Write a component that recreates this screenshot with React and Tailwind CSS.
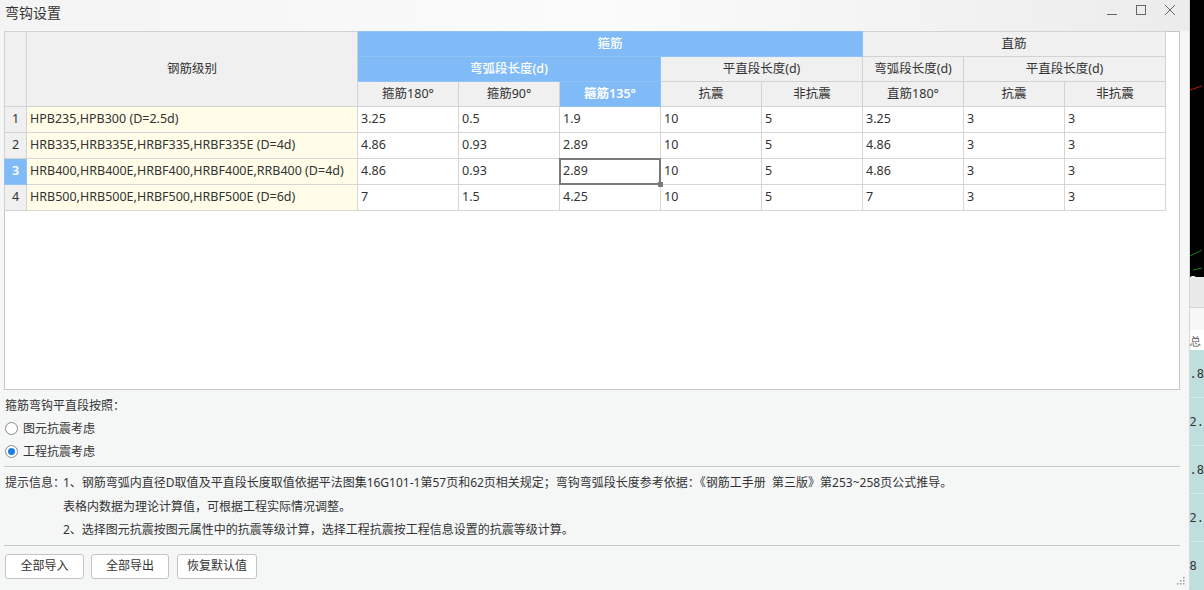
import React from "react";

const rows = [
  ["HPB235,HPB300 (D=2.5d)", "3.25", "0.5", "1.9", "10", "5", "3.25", "3", "3"],
  ["HRB335,HRB335E,HRBF335,HRBF335E (D=4d)", "4.86", "0.93", "2.89", "10", "5", "4.86", "3", "3"],
  ["HRB400,HRB400E,HRBF400,HRBF400E,RRB400 (D=4d)", "4.86", "0.93", "2.89", "10", "5", "4.86", "3", "3"],
  ["HRB500,HRB500E,HRBF500,HRBF500E (D=6d)", "7", "1.5", "4.25", "10", "5", "7", "3", "3"],
];

const font = { fontFamily: '"Noto Sans", "Noto Sans CJK SC", sans-serif' };

function Radio({ checked, label }) {
  return (
    <label className="flex items-center h-[23px] gap-[5px]">
      <span className="w-[13px] h-[13px] rounded-full border border-[#8a8a8a] bg-white flex items-center justify-center">
        {checked && <span className="w-[7px] h-[7px] rounded-full bg-[#1f7be8]" />}
      </span>
      <span>{label}</span>
    </label>
  );
}

export default function App() {
  const th = "border border-[#d2d2d2] bg-[#f0f0f0] font-normal text-center";
  const blue = "border border-[#8fc3f8] bg-[#80bbf8] text-white font-medium text-center";
  const td = "border border-[#d6d6d6] bg-white px-[3px] text-left";
  return (
    <div className="w-[1204px] h-[590px] flex overflow-hidden text-[#333]" style={font}>
      <div className="w-[1192px] h-full flex flex-col bg-[#f5f7f7] border-r border-[#d8d8d8]">
        {/* title bar */}
        <div className="h-[31px] flex items-start bg-gradient-to-r from-[#f4f4f4] via-[#fbfbfb] to-[#ececec]">
          <div className="pl-[5px] pt-[2px] text-[14px]">弯钩设置</div>
          <div className="ml-auto flex items-center gap-[17px] pr-[13px] pt-[4px] text-[#555]">
            <svg width="12" height="12" viewBox="0 0 12 12"><path d="M1 10.5h10" stroke="#666" strokeWidth="1" /></svg>
            <svg width="12" height="12" viewBox="0 0 12 12"><rect x="1.5" y="1.5" width="9" height="9" fill="none" stroke="#666" strokeWidth="1" /></svg>
            <svg width="12" height="12" viewBox="0 0 12 12"><path d="M1 1l10 10M11 1L1 11" stroke="#666" strokeWidth="1" /></svg>
          </div>
        </div>

        {/* table */}
        <div className="ml-[4px] w-[1176px] h-[359px] border border-[#c6c6c6] bg-white">
          <table className="table-fixed border-collapse text-[12.5px] w-[1161px] -mt-px -ml-px">
            <colgroup>
              <col className="w-[22px]" />
              <col className="w-[331px]" />
              <col className="w-[101px]" />
              <col className="w-[101px]" />
              <col className="w-[101px]" />
              <col className="w-[101px]" />
              <col className="w-[101px]" />
              <col className="w-[101px]" />
              <col className="w-[101px]" />
              <col className="w-[101px]" />
            </colgroup>
            <thead>
              <tr className="h-[25px]">
                <th rowSpan={3} className={th}></th>
                <th rowSpan={3} className={th}>钢筋级别</th>
                <th colSpan={5} className={blue}>箍筋</th>
                <th colSpan={3} className={th}>直筋</th>
              </tr>
              <tr className="h-[25px]">
                <th colSpan={3} className={blue}>弯弧段长度(d)</th>
                <th colSpan={2} className={th}>平直段长度(d)</th>
                <th className={th}>弯弧段长度(d)</th>
                <th colSpan={2} className={th}>平直段长度(d)</th>
              </tr>
              <tr className="h-[25px]">
                <th className={th}>箍筋180°</th>
                <th className={th}>箍筋90°</th>
                <th className={blue + " font-semibold"}>箍筋135°</th>
                <th className={th}>抗震</th>
                <th className={th}>非抗震</th>
                <th className={th}>直筋180°</th>
                <th className={th}>抗震</th>
                <th className={th}>非抗震</th>
              </tr>
            </thead>
            <tbody>
              {rows.map((r, i) => (
                <tr key={i} className="h-[26px]">
                  <td
                    className={
                      i === 2
                        ? "border border-[#8fc3f8] bg-[#80bbf8] text-white font-semibold text-center"
                        : "border border-[#d2d2d2] bg-[#f0f0f0] text-center"
                    }
                  >
                    {i + 1}
                  </td>
                  <td className="border border-[#d6d6d6] bg-[#fffde8] px-[3px] whitespace-nowrap">{r[0]}</td>
                  {r.slice(1).map((v, j) => (
                    <td key={j} className={td + (i === 2 && j === 2 ? " relative" : "")}>
                      {v}
                      {i === 2 && j === 2 && (
                        <>
                          <span className="absolute -inset-px border-2 border-[#7a7a7a] pointer-events-none" />
                          <span className="absolute -right-[3px] -bottom-[3px] w-[5px] h-[5px] bg-[#7a7a7a]" />
                        </>
                      )}
                    </td>
                  ))}
                </tr>
              ))}
            </tbody>
          </table>
        </div>

        {/* options */}
        <div className="pl-[5px] pt-[7px] text-[12px]">
          <div className="h-[18px] flex items-center">箍筋弯钩平直段按照：</div>
          <div className="pt-[2px]">
            <Radio label="图元抗震考虑" />
            <Radio checked label="工程抗震考虑" />
          </div>
        </div>
        <div className="ml-[4px] w-[1176px] border-t border-[#c8c8c8] mt-[3px]" />

        {/* info */}
        <div className="flex pl-[5px] pt-[4px] text-[12px] leading-[23.5px]">
          <div className="w-[58px] shrink-0 whitespace-nowrap">提示信息：</div>
          <div>
            <div>1、钢筋弯弧内直径D取值及平直段长度取值依据平法图集16G101-1第57页和62页相关规定；弯钩弯弧段长度参考依据：《钢筋工手册&nbsp;&nbsp;第三版》第253~258页公式推导。</div>
            <div>表格内数据为理论计算值，可根据工程实际情况调整。</div>
            <div>2、选择图元抗震按图元属性中的抗震等级计算，选择工程抗震按工程信息设置的抗震等级计算。</div>
          </div>
        </div>
        <div className="ml-[4px] w-[1176px] border-t border-[#c8c8c8] mt-[3px]" />

        {/* buttons */}
        <div className="flex items-end pl-[5px] pt-[8px] text-[12px]">
          <button className="w-[79px] h-[25px] border border-[#c4c4c4] rounded-[3px] bg-white">全部导入</button>
          <button className="ml-[7px] w-[78px] h-[25px] border border-[#c4c4c4] rounded-[3px] bg-white">全部导出</button>
          <button className="ml-[8px] w-[80px] h-[25px] border border-[#c4c4c4] rounded-[3px] bg-white">恢复默认值</button>
          <svg className="ml-auto mr-[4px] -mb-[6px]" width="8" height="8" viewBox="0 0 8 8">
            <g fill="#999">
              <rect x="6" y="0" width="1.5" height="1.5" />
              <rect x="3" y="3" width="1.5" height="1.5" />
              <rect x="6" y="3" width="1.5" height="1.5" />
              <rect x="0" y="6" width="1.5" height="1.5" />
              <rect x="3" y="6" width="1.5" height="1.5" />
              <rect x="6" y="6" width="1.5" height="1.5" />
            </g>
          </svg>
        </div>
      </div>

      {/* background app strip */}
      <div className="flex-1 flex flex-col" style={{ fontFamily: '"DejaVu Sans Mono", monospace' }}>
        <div className="h-[297px] bg-black relative overflow-hidden">
          <svg width="12" height="297" className="absolute inset-0">
            <path d="M0 90 L12 86" stroke="#c01010" strokeWidth="1" />
            <path d="M0 256 L12 250" stroke="#108010" strokeWidth="1" />
            <path d="M3 270 L12 268 M2 290 L12 286" stroke="#108010" strokeWidth="1" />
          </svg>
          <span className="absolute left-0 top-[274px] text-[13px] text-white leading-none">2</span>
        </div>
        <div className="h-[33px] bg-[#e9e9e9] border-b border-[#d4d4d4]" />
        <div className="h-[24px] bg-[#f7f7f7]" />
        <div className="h-[20px] bg-white text-[11px] pt-[4px] text-[#555]">总</div>
        <div className="flex-1 bg-[#bfdede] text-[12px] text-[#333]">
          <div className="h-[48px] flex items-center border-b border-[#d8e8e8]">.8</div>
          <div className="h-[48px] flex items-center border-b border-[#d8e8e8]">2.</div>
          <div className="h-[48px] flex items-center border-b border-[#d8e8e8]">.8</div>
          <div className="h-[48px] flex items-center border-b border-[#d8e8e8]">2.</div>
          <div className="h-[48px] flex items-center">8</div>
        </div>
      </div>
    </div>
  );
}
